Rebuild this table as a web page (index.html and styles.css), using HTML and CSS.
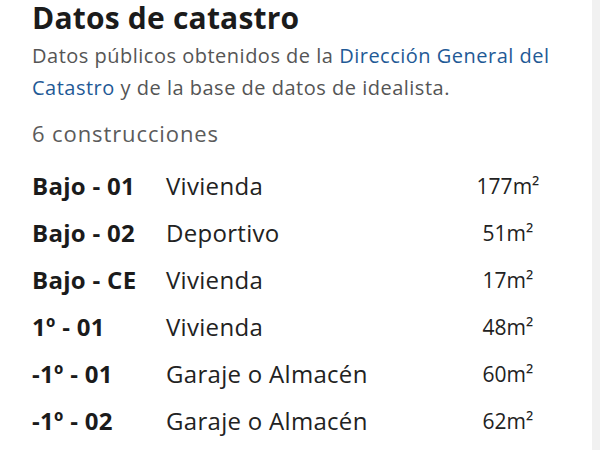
FILE: index.html
```html
<!DOCTYPE html>
<html lang="es">
<head>
<meta charset="utf-8">
<link rel="stylesheet" href="styles.css">
</head>
<body>
<div class="page">
  <main class="content">
    <h1 class="title">Datos de catastro</h1>
    <p class="intro">Datos públicos obtenidos de la <a class="link" href="#">Dirección General del Catastro</a> y de la base de datos de idealista.</p>
    <p class="count">6 construcciones</p>
    <div class="table">
      <div class="row"><span class="unit">Bajo - 01</span><span class="use">Vivienda</span><span class="area">177m²</span></div>
      <div class="row"><span class="unit">Bajo - 02</span><span class="use">Deportivo</span><span class="area">51m²</span></div>
      <div class="row"><span class="unit">Bajo - CE</span><span class="use">Vivienda</span><span class="area">17m²</span></div>
      <div class="row"><span class="unit">1º - 01</span><span class="use">Vivienda</span><span class="area">48m²</span></div>
      <div class="row"><span class="unit">-1º - 01</span><span class="use">Garaje o Almacén</span><span class="area">60m²</span></div>
      <div class="row"><span class="unit">-1º - 02</span><span class="use">Garaje o Almacén</span><span class="area">62m²</span></div>
    </div>
  </main>
  <aside class="edge"></aside>
</div>
</body>
</html>
```
FILE: styles.css
```css
html, body {
  margin: 0;
  padding: 0;
  background: #ffffff;
}
body {
  font-family: "Open Sans", "Noto Sans", sans-serif;
  color: #1a1a1a;
}
.page {
  display: flex;
  height: 450px;
  overflow: hidden;
}
.content {
  flex: 1;
  padding: 0 0 0 32px;
}
.edge {
  width: 8px;
  background: #f1f1f1;
}
.title {
  margin: 0;
  font-size: 30px;
  font-weight: 700;
  letter-spacing: 0.2px;
  line-height: 36px;
  color: #1b1b1b;
}
.intro {
  margin: 4px 0 0;
  font-size: 20px;
  letter-spacing: 0.5px;
  line-height: 32px;
  color: #555555;
  width: 545px;
}
.link {
  color: #1f5a96;
  text-decoration: none;
}
.count {
  margin: 13px 0 0;
  font-size: 22px;
  letter-spacing: 0.9px;
  line-height: 32px;
  color: #5b5b5b;
}
.table {
  margin-top: 13px;
  display: flex;
  flex-direction: column;
}
.row {
  display: grid;
  grid-template-columns: 134px 292px 100px;
  height: 47px;
  align-items: center;
  font-size: 24px;
  letter-spacing: 0.3px;
}
.unit {
  font-weight: 700;
  color: #1b1b1b;
}
.use {
  color: #222222;
}
.area {
  text-align: center;
  font-size: 21px;
  letter-spacing: 0;
  color: #222222;
}
```
